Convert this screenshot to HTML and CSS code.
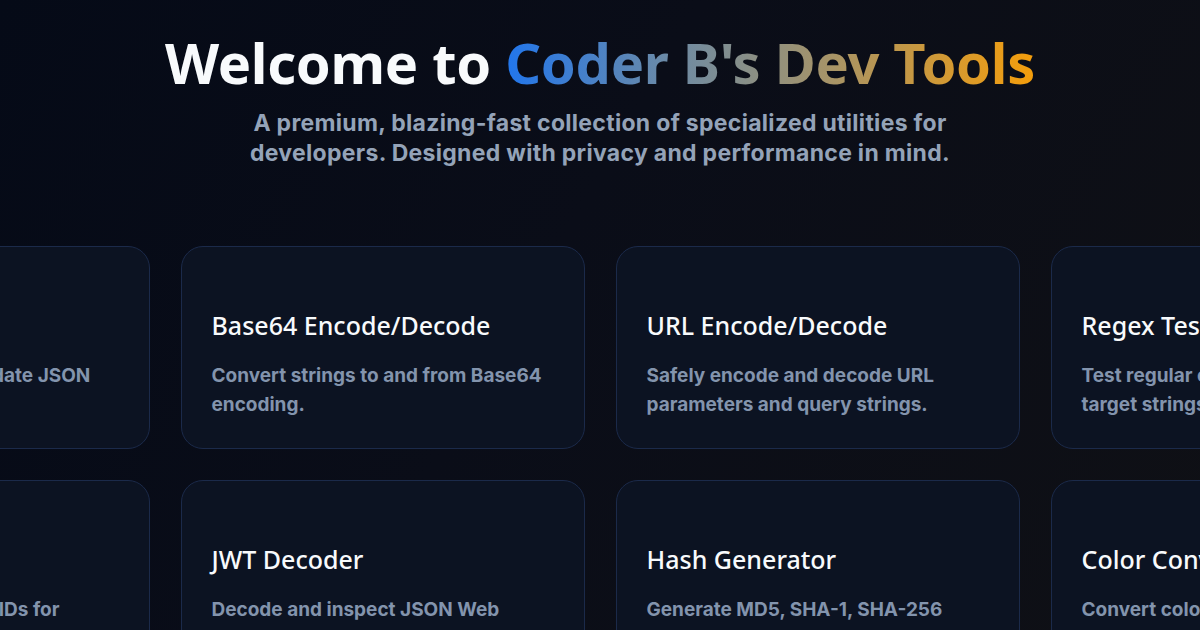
FILE: index.html
```html
<!DOCTYPE html>
<html lang="en">
<head>
<meta charset="utf-8">
<title>Coder B's Dev Tools</title>
<link rel="stylesheet" href="styles.css">
</head>
<body>
<main class="page">
  <header class="hero">
    <h1 class="hero-title">Welcome to <span class="grad">Coder B's Dev Tools</span></h1>
    <p class="hero-sub">A premium, blazing-fast collection of specialized utilities for developers. Designed with privacy and performance in mind.</p>
  </header>
  <section class="grid">
    <article class="card"><div class="card-icon"></div><h2 class="card-title">JSON Formatter</h2><p class="card-desc">Format, minify, and validate JSON data.</p></article>
    <article class="card"><div class="card-icon"></div><h2 class="card-title">Base64 Encode/Decode</h2><p class="card-desc">Convert strings to and from Base64 encoding.</p></article>
    <article class="card"><div class="card-icon"></div><h2 class="card-title">URL Encode/Decode</h2><p class="card-desc">Safely encode and decode URL parameters and query strings.</p></article>
    <article class="card"><div class="card-icon"></div><h2 class="card-title">Regex Tester</h2><p class="card-desc">Test regular expressions against target strings.</p></article>
    <article class="card"><div class="card-icon"></div><h2 class="card-title">UUID Generator</h2><p class="card-desc">Generate random v4 UUIDs for applications.</p></article>
    <article class="card"><div class="card-icon"></div><h2 class="card-title">JWT Decoder</h2><p class="card-desc">Decode and inspect JSON Web Tokens.</p></article>
    <article class="card"><div class="card-icon"></div><h2 class="card-title">Hash Generator</h2><p class="card-desc">Generate MD5, SHA-1, SHA-256 hashes instantly.</p></article>
    <article class="card"><div class="card-icon"></div><h2 class="card-title">Color Converter</h2><p class="card-desc">Convert colors between HEX, RGB and HSL.</p></article>
  </section>
</main>
</body>
</html>
```
FILE: styles.css
```css
* { box-sizing: border-box; }
html, body {
  margin: 0;
  padding: 0;
  width: 1200px;
  height: 630px;
  overflow: hidden;
}
body {
  background: linear-gradient(120deg, #050a17 0%, #0a0d18 45%, #0f1015 100%);
  color: #f8fafc;
  font-family: "Noto Sans", "Open Sans", sans-serif;
}
.page {
  display: flex;
  flex-direction: column;
  align-items: center;
  padding-top: 26px;
}
.hero {
  display: flex;
  flex-direction: column;
  align-items: center;
  text-align: center;
}
.hero-title {
  margin: 0;
  font-size: 56px;
  font-weight: 700;
  line-height: 72px;
  letter-spacing: -0.3px;
  color: #f8fafc;
}
.grad {
  background: linear-gradient(90deg, #2176ec 0%, #6a8aa8 30%, #a89466 62%, #f59e0b 100%);
  -webkit-background-clip: text;
  background-clip: text;
  color: transparent;
}
.hero-sub {
  margin: 10px 0 0;
  width: 740px;
  font-family: "Inter", sans-serif;
  font-size: 23px;
  font-weight: 700;
  line-height: 30px;
  letter-spacing: 0.3px;
  color: #94a3b8;
}
.grid {
  margin-top: 78px;
  width: 1200px;
  display: grid;
  grid-template-columns: repeat(4, 404px);
  grid-auto-rows: 203px;
  gap: 31px;
  justify-content: center;
}
.card {
  background: #0c1322;
  border: 1px solid #1b2a4a;
  border-radius: 22px;
  padding: 31px 30px;
  display: flex;
  flex-direction: column;
}
.card-icon {
  height: 31px;
  flex: none;
}
.card-title {
  margin: 0;
  font-size: 25px;
  font-weight: 500;
  line-height: 32px;
  color: #f8fafc;
}
.card-desc {
  margin: 20px 0 0;
  font-family: "Inter", sans-serif;
  font-size: 19px;
  font-weight: 700;
  line-height: 29px;
  color: #8394ad;
}
```
